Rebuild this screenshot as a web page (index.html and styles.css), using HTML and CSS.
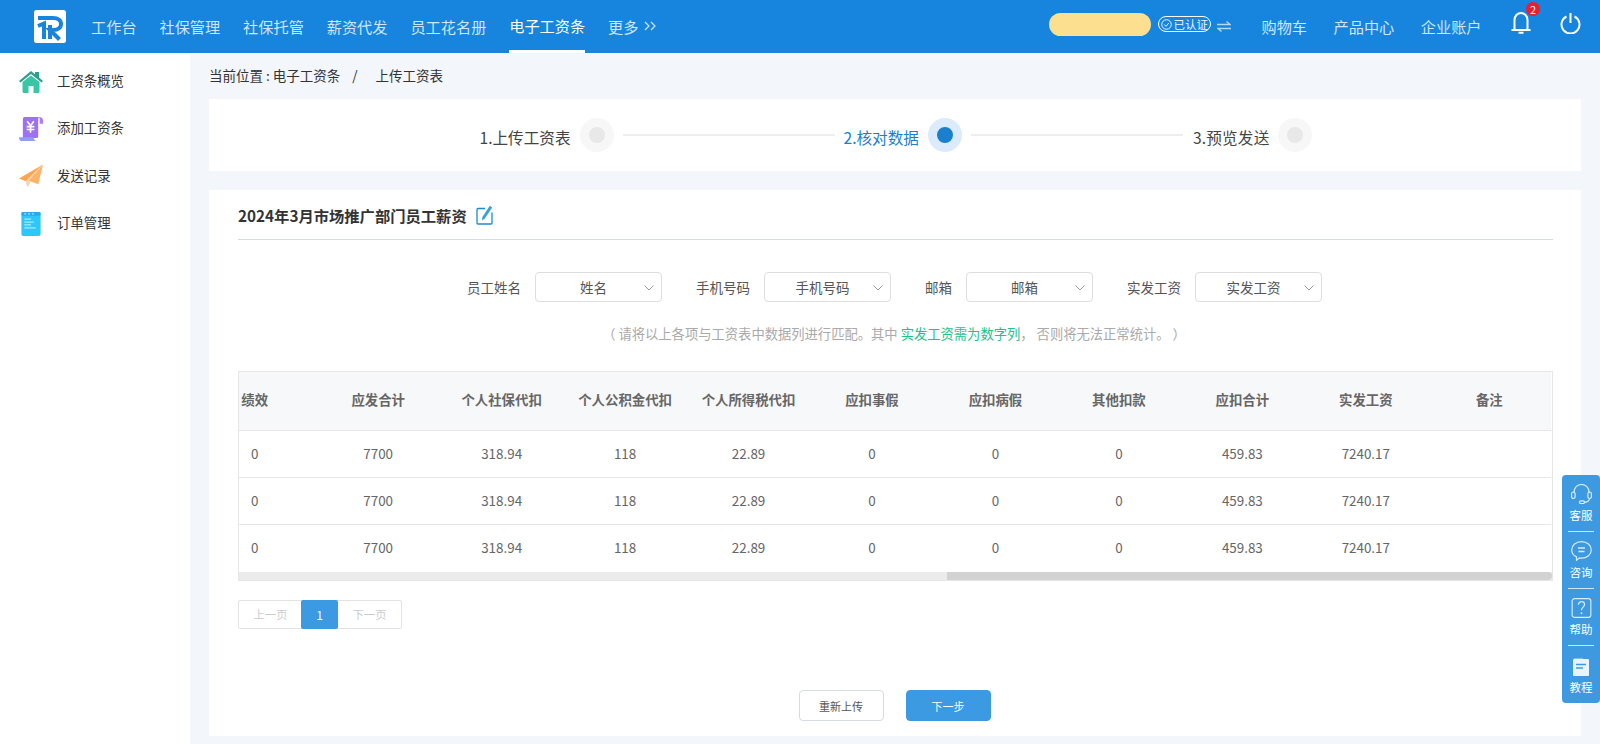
FILE: index.html
```html
<!DOCTYPE html>
<html lang="zh-CN">
<head>
    <meta charset="UTF-8">
    <title>电子工资条</title>
    <link rel="stylesheet" href="styles.css">
</head>
<body>
    <header class="topbar">
        <svg class="logo" viewBox="0 0 32 33">
            <rect width="32" height="33" rx="2.5" fill="#fff"/>
            <path d="M4 8h15c5 0 8 2.200 8 6s-3 6-8 6h-3l9.500 9.500" fill="none" stroke="#1785dd" stroke-width="4"/>
            <path d="M4 16l6-2.500V29" fill="none" stroke="#1785dd" stroke-width="4"/>
            <path d="M16 15v14" fill="none" stroke="#1785dd" stroke-width="4"/>
        </svg>
        <nav class="nav">
            <a class="nav-item">工作台</a>
            <a class="nav-item">社保管理</a>
            <a class="nav-item">社保托管</a>
            <a class="nav-item">薪资代发</a>
            <a class="nav-item">员工花名册</a>
            <a class="nav-item active">电子工资条</a>
            <a class="nav-item more">更多
                <svg class="more-icon" viewBox="0 0 12 10"><path d="M1 1l4 4-4 4M7 1l4 4-4 4" fill="none" stroke="#cfe6fa" stroke-width="1.200"/></svg>
            </a>
        </nav>
        <div class="top-right">
            <div class="company"></div>
            <div class="verified">
                <svg viewBox="0 0 12 12" class="verified-icon"><circle cx="6" cy="6" r="5.200" fill="none" stroke="#fff"/><path d="M3.500 6l2 2 3-3.600" fill="none" stroke="#fff"/></svg>
                已认证
            </div>
            <svg class="swap" viewBox="0 0 14 11"><path d="M0 3.500h13L9.500 .5M14 7.500H1L4.500 10.500" fill="none" stroke="#b5d8f5" stroke-width="1.300"/></svg>
            <a class="top-link cart">购物车</a>
            <a class="top-link">产品中心</a>
            <a class="top-link">企业账户</a>
            <div class="bell">
                <svg viewBox="0 0 20 22" class="bell-icon"><path d="M.5 18h19M3.500 18V8c0-4 3-7 6.500-7s6.500 3 6.500 7v10M7.500 20.800h5" fill="none" stroke="#fff" stroke-width="2"/></svg>
                <span class="badge">2</span>
            </div>
            <svg class="power" viewBox="0 0 21 21"><path d="M6.500 3.500a9 9 0 1 0 8 0M10.500 0v10" fill="none" stroke="#fff" stroke-width="2"/></svg>
        </div>
    </header>

    <div class="layout">
        <aside class="sidebar">
            <a class="side-item">
                <svg class="side-icon" viewBox="0 0 24 22"><path d="M0 10L12 0l4 3.300V1h4v5.600L24 10l-1.500 1.500L12 3 1.500 11.500z" fill="#2f9e8c"/><path d="M3.500 11L12 4.500l8.500 6.500v9.500a1.500 1.500 0 0 1-1.500 1.500h-4.500v-7h-5v7H5a1.500 1.500 0 0 1-1.500-1.500z" fill="#38c6a5"/></svg>
                <span class="side-text">工资条概览</span>
            </a>
            <a class="side-item">
                <svg class="side-icon" viewBox="0 0 25 25"><path d="M4 2a2 2 0 0 1 2-2h15a3 3 0 0 0-1 2.500V20a2 2 0 0 1-2 2H4z" fill="#9d70f5"/><path d="M21 0c2 0 4 1 4 3.500V7h-3.500V2z" fill="#b07df0"/><path d="M0 21h14c1 0 1.500 1 2 2.500.3.800 1 1.500 2 1.500H2.500C1 25 0 23 0 21z" fill="#8f9df5"/><path d="M8.500 4.500l3.500 4.500 3.500-4.500M8 10h8M8 13h8M12 9v7.500" fill="none" stroke="#fff" stroke-width="1.700"/></svg>
                <span class="side-text">添加工资条</span>
            </a>
            <a class="side-item">
                <svg class="side-icon" viewBox="0 0 23 22"><path d="M23 0L0 13.500l6.500 2.500z" fill="#ffa44f"/><path d="M23 0L9 15.500 18.500 19z" fill="#ffb268"/><path d="M23 0L6.500 16 8 22l3-4.500L9 15.500z" fill="#f9d3a8"/></svg>
                <span class="side-text">发送记录</span>
            </a>
            <a class="side-item">
                <svg class="side-icon" viewBox="0 0 20 25"><rect width="20" height="25" rx="2" fill="#2cc8fb"/><rect width="20" height="4" rx="1.500" fill="#2fa6ee"/><path d="M3 1.900h2M7 1.900h2M11 1.900h2M3 7.500h7M3 10.500h10M3 13.500h7M3 16.500h12" stroke="#a8e9fd" stroke-width="1.300"/></svg>
                <span class="side-text">订单管理</span>
            </a>
        </aside>

        <main class="content">
            <div class="breadcrumb">
                <span>当前位置 : 电子工资条</span>
                <span class="crumb-sep">/</span>
                <span>上传工资表</span>
            </div>

            <section class="steps">
                <span class="step-label">1.上传工资表</span>
                <span class="step-dot"></span>
                <span class="step-line"></span>
                <span class="step-label current">2.核对数据</span>
                <span class="step-dot current"></span>
                <span class="step-line"></span>
                <span class="step-label last">3.预览发送</span>
                <span class="step-dot"></span>
            </section>

            <section class="card">
                <div class="card-title">
                    <h2>2024年3月市场推广部门员工薪资</h2>
                    <svg class="edit-icon" viewBox="0 0 17 20"><path d="M9 3.500H2a1 1 0 0 0-1 1V18a1 1 0 0 0 1 1h13a1 1 0 0 0 1-1V7.500" fill="none" stroke="#1a8ad8" stroke-width="1.300"/><path d="M6 15.500l.4-3.500L13.800.8l2.400 1.600L8.600 13.800z" fill="#3a9fe0"/></svg>
                </div>

                <div class="filters">
                    <label class="filter">员工姓名
                        <span class="select">姓名<svg class="chevron" viewBox="0 0 10 6"><path d="M.5.500L5 5 9.500.5" fill="none" stroke="#999"/></svg></span>
                    </label>
                    <label class="filter">手机号码
                        <span class="select">手机号码<svg class="chevron" viewBox="0 0 10 6"><path d="M.5.500L5 5 9.500.5" fill="none" stroke="#999"/></svg></span>
                    </label>
                    <label class="filter">邮箱
                        <span class="select">邮箱<svg class="chevron" viewBox="0 0 10 6"><path d="M.5.500L5 5 9.500.5" fill="none" stroke="#999"/></svg></span>
                    </label>
                    <label class="filter">实发工资
                        <span class="select">实发工资<svg class="chevron" viewBox="0 0 10 6"><path d="M.5.500L5 5 9.500.5" fill="none" stroke="#999"/></svg></span>
                    </label>
                </div>

                <p class="hint">（ 请将以上各项与工资表中数据列进行匹配。其中 <em>实发工资需为数字列</em>， 否则将无法正常统计。&nbsp;）</p>

                <div class="table-box">
                    <table class="data-table">
                        <thead>
                            <tr>
                                <th>绩效</th><th>应发合计</th><th>个人社保代扣</th><th>个人公积金代扣</th><th>个人所得税代扣</th><th>应扣事假</th><th>应扣病假</th><th>其他扣款</th><th>应扣合计</th><th>实发工资</th><th>备注</th>
                            </tr>
                        </thead>
                        <tbody>
                            <tr>
                                <td>0</td><td>7700</td><td>318.94</td><td>118</td><td>22.89</td><td>0</td><td>0</td><td>0</td><td>459.83</td><td>7240.17</td><td></td>
                            </tr>
                            <tr>
                                <td>0</td><td>7700</td><td>318.94</td><td>118</td><td>22.89</td><td>0</td><td>0</td><td>0</td><td>459.83</td><td>7240.17</td><td></td>
                            </tr>
                            <tr>
                                <td>0</td><td>7700</td><td>318.94</td><td>118</td><td>22.89</td><td>0</td><td>0</td><td>0</td><td>459.83</td><td>7240.17</td><td></td>
                            </tr>
                        </tbody>
                    </table>
                    <div class="scroll-track"><div class="scroll-thumb"></div></div>
                </div>

                <div class="pager">
                    <a class="page-btn">上一页</a>
                    <a class="page-btn active">1</a>
                    <a class="page-btn">下一页</a>
                </div>

                <div class="actions">
                    <button class="btn">重新上传</button>
                    <button class="btn primary">下一步</button>
                </div>
            </section>
        </main>
    </div>

    <div class="float-panel">
        <a class="float-item">
            <svg class="float-icon" viewBox="0 0 21 20"><path d="M3 9V8a7.500 7.500 0 0 1 15 0v1" fill="none" stroke="#d8ecfb" stroke-width="1.200"/><rect x=".6" y="8" width="3.500" height="6.500" rx="1.700" fill="none" stroke="#d8ecfb" stroke-width="1.200"/><rect x="16.900" y="8" width="3.500" height="6.500" rx="1.700" fill="none" stroke="#d8ecfb" stroke-width="1.200"/><path d="M18.500 14.500c0 2.500-2 3.500-5 3.800" fill="none" stroke="#d8ecfb" stroke-width="1.200"/><rect x="8.500" y="16.800" width="5" height="2.700" rx="1.300" fill="none" stroke="#d8ecfb" stroke-width="1.200"/></svg>
            客服
        </a>
        <a class="float-item">
            <svg class="float-icon" viewBox="0 0 21 20"><path d="M10.500.7c5.500 0 9.800 3.600 9.800 8.200s-4.300 8.200-9.800 8.200c-.7 0-1.400-.1-2-.2L5.500 19.300v-3.400C2.600 14.400.7 11.800.7 8.900.7 4.300 5 .7 10.500.7z" fill="none" stroke="#d8ecfb" stroke-width="1.200"/><path d="M7 7h7M7.500 10.500h6" stroke="#d8ecfb" stroke-width="1.300"/></svg>
            咨询
        </a>
        <a class="float-item">
            <svg class="float-icon" viewBox="0 0 21 21"><rect x=".7" y=".7" width="19.600" height="19.600" rx="2.500" fill="none" stroke="#d8ecfb" stroke-width="1.200"/><path d="M7.300 7c0-2 1.400-3.200 3.200-3.200S13.700 5 13.700 6.800c0 2.700-3.200 3-3.200 6" fill="none" stroke="#d8ecfb" stroke-width="1.300"/><circle cx="10.500" cy="16" r="1" fill="#d8ecfb"/></svg>
            帮助
        </a>
        <a class="float-item last">
            <svg class="float-icon doc" viewBox="0 0 16 18"><rect y="1" width="16" height="17" rx="1" fill="#e8f4fd"/><path d="M1 .5h9" stroke="#7fbdec"/><path d="M3 6.500h10M3 10h7" stroke="#3d9ae0" stroke-width="1.500"/></svg>
            教程
        </a>
    </div>
</body>
</html>
```

FILE: styles.css
```css
* {
    box-sizing: border-box;
}

html, body {
    margin: 0;
    height: 744px;
    overflow: hidden;
}

body {
    font-family: "Noto Sans CJK SC", "Noto Sans", sans-serif;
    background-color: #f3f6fb;
    color: #333;
}

/* top bar */
.topbar {
    display: flex;
    align-items: center;
    height: 53px;
    padding-left: 34px;
    background-color: #1785dd;
}

.logo {
    width: 32px;
    height: 33px;
    flex-shrink: 0;
}

.nav {
    display: flex;
    height: 53px;
    margin-left: 25px;
    gap: 22.9px;
}

.nav-item {
    display: flex;
    align-items: center;
    padding-top: 2px;
    font-size: 15.2px;
    color: #cfe6fa;
    border-bottom: 3px solid transparent;
}

.nav-item.active {
    padding-top: 0;
    color: #fff;
    border-bottom-color: #fff;
}

.more {
    gap: 6px;
}

.more-icon {
    width: 12px;
    height: 10px;
}

.top-right {
    display: flex;
    align-items: center;
    margin-left: auto;
    height: 53px;
    padding-right: 19px;
}

.company {
    width: 102px;
    height: 23px;
    background-color: #fde08f;
    border-radius: 12px;
    margin-top: -4px;
}

.verified {
    display: flex;
    align-items: center;
    gap: 1px;
    width: 53px;
    height: 16px;
    margin-left: 7px;
    margin-top: -5px;
    padding-left: 2px;
    font-size: 11.5px;
    white-space: nowrap;
    color: #e8f4fd;
    border: 1px solid #fff;
    border-radius: 8px;
}

.verified-icon {
    width: 11px;
    height: 11px;
    flex-shrink: 0;
}

.swap {
    width: 14px;
    height: 11px;
    margin-left: 6px;
}

.top-link {
    margin-left: 26.5px;
    font-size: 15.2px;
    color: #cfe6fa;
    margin-top: -1px;
}

.cart {
    margin-left: 30px;
}

.bell {
    position: relative;
    width: 20px;
    height: 22px;
    margin-left: 29.5px;
    margin-top: -7px;
}

.bell-icon {
    display: block;
    width: 20px;
    height: 22px;
}

.badge {
    position: absolute;
    top: -10px;
    left: 15px;
    width: 14px;
    height: 14px;
    font-size: 11px;
    line-height: 14px;
    text-align: center;
    color: #fff;
    background-color: #ee1c2e;
    border-radius: 50%;
}

.power {
    width: 21px;
    height: 21px;
    margin-left: 29px;
    margin-top: -6px;
}

/* page frame */
.layout {
    display: flex;
    height: 691px;
}

.sidebar {
    width: 190px;
    flex-shrink: 0;
    padding-top: 5px;
    background-color: #fff;
}

.side-item {
    display: flex;
    align-items: center;
    height: 47.3px;
    font-size: 13.4px;
    color: #333;
}

.side-icon {
    width: 24px;
    height: 24px;
    margin: 0 14px 0 19px;
    flex-shrink: 0;
}

.side-text {
    margin-top: -3px;
}

.content {
    flex: 1;
    min-width: 0;
    padding: 0 19px;
}

.breadcrumb {
    display: flex;
    align-items: center;
    height: 46px;
    padding-bottom: 3px;
    font-size: 13.5px;
    color: #333;
}

.crumb-sep {
    margin: 0 18px 0 12px;
}

/* steps */
.steps {
    display: flex;
    align-items: center;
    justify-content: center;
    gap: 9px;
    height: 72px;
    padding-left: 2px;
    background-color: #fff;
}

.step-label {
    font-size: 15.6px;
    color: #444;
    margin-top: 3px;
}

.step-label.current {
    color: #1a7fd0;
}

.step-label.last {
    margin-left: 1px;
    letter-spacing: .2px;
}

.step-dot {
    width: 34px;
    height: 34px;
    border: 9px solid #f7f7f7;
    border-radius: 50%;
    background-color: #e8e8e8;
}

.step-dot.current {
    border-color: #dcebfc;
    background-color: #1a7fcc;
}

.step-line {
    width: 212px;
    height: 2px;
    background-color: #eee;
}

/* card */
.card {
    height: 546px;
    margin-top: 19px;
    padding: 0 28px 0 29px;
    background-color: #fff;
}

.card-title {
    display: flex;
    align-items: center;
    height: 50px;
    gap: 9px;
    border-bottom: 1px solid #d5dbe3;
}

.card-title h2 {
    margin: 0;
    font-size: 15.3px;
    font-weight: 700;
    color: #333;
}

.edit-icon {
    width: 17px;
    height: 20px;
}

.filters {
    display: flex;
    justify-content: center;
    gap: 34px;
    margin-top: 32px;
    padding-right: 2px;
}

.filter {
    display: flex;
    align-items: center;
    gap: 14px;
    font-size: 13.5px;
    color: #555;
}

.select {
    position: relative;
    display: block;
    width: 127px;
    height: 30px;
    padding-right: 10px;
    line-height: 28px;
    text-align: center;
    border: 1px solid #dedede;
    border-radius: 4px;
    background-color: #fff;
}

.chevron {
    position: absolute;
    top: 12px;
    right: 7px;
    width: 10px;
    height: 6px;
}

.hint {
    margin: 22px 0 0;
    padding-right: 3px;
    font-size: 13.3px;
    line-height: 20px;
    text-align: center;
    color: #aaa;
}

.hint em {
    font-style: normal;
    color: #1ec28b;
}

/* table */
.table-box {
    height: 210px;
    margin-top: 27px;
    overflow: hidden;
    border: 1px solid #e6e6e6;
}

.data-table {
    width: 1358px;
    margin-left: -46px;
    table-layout: fixed;
    border-collapse: collapse;
    font-size: 13.4px;
}

.data-table th {
    height: 58px;
    padding: 0 0 3px;
    font-weight: 700;
    color: #666;
    background-color: #f7f8fa;
    border-bottom: 1px solid #e6e6e6;
}

.data-table td {
    height: 47.3px;
    padding: 0 0 2px;
    text-align: center;
    color: #666;
    border-bottom: 1px solid #e6e6e6;
}

.data-table tr:last-child td {
    border-bottom: none;
}

.scroll-track {
    display: flex;
    justify-content: flex-end;
    height: 8px;
    background-color: #ebebeb;
}

.scroll-thumb {
    width: 605px;
    height: 8px;
    background-color: #d2d2d2;
    border-radius: 0 4px 4px 0;
}

/* pager */
.pager {
    display: flex;
    width: 164px;
    height: 29px;
    margin-top: 19px;
    border: 1px solid #e3e3e3;
    border-radius: 2px;
}

.page-btn {
    flex: 1;
    font-size: 11.3px;
    line-height: 27px;
    text-align: center;
    color: #ccc;
}

.page-btn.active {
    flex: 0 0 37px;
    margin: -1px 0 -1px -1px;
    line-height: 29px;
    font-size: 12px;
    color: #fff;
    background-color: #3b9ae1;
    border-radius: 2px;
}

/* buttons */
.actions {
    display: flex;
    justify-content: center;
    gap: 22px;
    margin-top: 61px;
    padding-right: 2px;
}

.btn {
    width: 85px;
    height: 31px;
    padding: 0;
    font-family: inherit;
    font-size: 11px;
    color: #555;
    background-color: #fff;
    border: 1px solid #d5dbe3;
    border-radius: 4px;
}

.btn.primary {
    color: #fff;
    background-color: #3b9ae1;
    border-color: #3b9ae1;
}

/* floating help panel */
.float-panel {
    position: fixed;
    top: 475px;
    right: 0;
    width: 38px;
    height: 228px;
    padding: 0 6px;
    background-color: #3d9ae0;
    border-radius: 4px;
}

.float-item {
    display: flex;
    flex-direction: column;
    align-items: center;
    height: 57px;
    padding-top: 9px;
    font-size: 11.5px;
    line-height: 14px;
    color: #fff;
    border-bottom: 1px solid #cfe6fa;
    gap: 4px;
}

.float-item.last {
    border-bottom: none;
}

.float-icon {
    width: 21px;
    height: 20px;
    flex-shrink: 0;
}

.doc {
    width: 16px;
    height: 18px;
    margin-top: 3px;
}
```
